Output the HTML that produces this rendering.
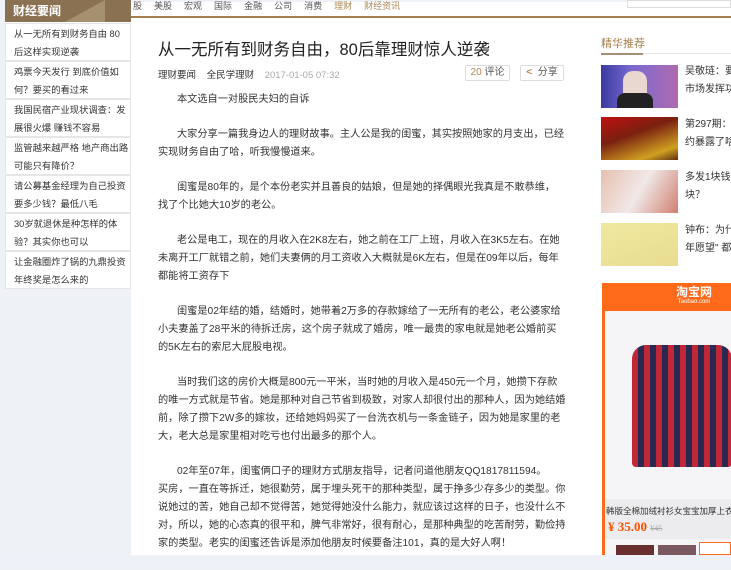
<!DOCTYPE html>
<html><head><meta charset="utf-8"><style>
*{margin:0;padding:0;box-sizing:border-box}
body{width:731px;height:561px;overflow:hidden;background:#eef1f6;font-family:"Liberation Sans","Noto Sans CJK SC",sans-serif;position:relative;color:#333}
.abs{position:absolute}
#main{left:131px;top:2px;width:600px;height:553px;background:#fff}
#nav{left:131px;top:2px;width:600px;height:16px;border-bottom:2px solid #a57f4e;font-size:9px;color:#555;white-space:nowrap;padding-left:2px;line-height:8px}
#nav span{margin-right:12px}
#left{left:5px;top:0;width:126px;height:288px;background:#fff}
#lh{left:5px;top:0;width:126px;height:22px;background:#8a7152;color:#fff;font-size:12px;font-weight:bold;line-height:22px;padding-left:8px;overflow:hidden}
#lh:after{content:"";position:absolute;left:60px;top:0;border-left:40px solid transparent;border-bottom:22px solid #a5906f}
.li{left:5px;width:126px;height:38px;border:1px solid #e6e6e6;font-size:9.3px;line-height:18px;padding:1px 8px;color:#333;background:#fff;white-space:nowrap;overflow:hidden}
.body p{font-size:10.2px;line-height:18px;margin-bottom:17px;white-space:nowrap;color:#333}
.body p span.i{display:inline-block;width:19px}
.ri{left:601px;width:77px;height:43px}
.rt{left:685px;font-size:10px;line-height:18px;white-space:nowrap;color:#333}
.btn{border:1px solid #ddd;border-radius:2px;font-size:10px;height:16px;line-height:14px;text-align:center;color:#555}
</style></head><body>
<div class="abs" id="main"></div>
<div class="abs" id="nav"><span>股</span><span>美股</span><span>宏观</span><span>国际</span><span>金融</span><span>公司</span><span>消费</span><span style="color:#b08a55">理财</span><span style="color:#b08a55">财经资讯</span></div>
<div class="abs" style="left:627px;top:0;width:104px;height:8px;border:1px solid #ddd;background:#fff"></div>
<div class="abs" id="left"></div>
<div class="abs" id="lh"><span style="position:relative;z-index:1">财经要闻</span></div>
<div class="abs li" style="top:23px">从一无所有到财务自由 80<br>后这样实现逆袭</div>
<div class="abs li" style="top:61px">鸡票今天发行 到底价值如<br>何？要买的看过来</div>
<div class="abs li" style="top:99px">我国民宿产业现状调查：发<br>展很火爆 赚钱不容易</div>
<div class="abs li" style="top:137px">监管越来越严格 地产商出路<br>可能只有降价？</div>
<div class="abs li" style="top:175px">请公募基金经理为自己投资<br>要多少钱？最低八毛</div>
<div class="abs li" style="top:213px">30岁就退休是种怎样的体<br>验？其实你也可以</div>
<div class="abs li" style="top:251px">让金融圈炸了锅的九鼎投资<br>年终奖是怎么来的</div>

<div class="abs" style="left:158px;top:36px;font-size:16.5px;color:#222;white-space:nowrap">从一无所有到财务自由，80后靠理财惊人逆袭</div>
<div class="abs" style="left:158px;top:67px;font-size:9.5px;white-space:nowrap"><span style="color:#333">理财要闻</span>&nbsp;&nbsp;&nbsp;&nbsp;<span style="color:#333">全民学理财</span>&nbsp;&nbsp;&nbsp;&nbsp;<span style="color:#aaa">2017-01-05 07:32</span></div>
<div class="abs btn" style="left:465px;top:65px;width:45px"><span style="color:#b08a55">20</span> 评论</div>
<div class="abs btn" style="left:520px;top:65px;width:44px"><span style="color:#b08a55;font-weight:bold">&lt;</span>&nbsp; 分享</div>

<div class="abs body" style="left:158px;top:91px">
<p><span class="i"></span>本文选自一对股民夫妇的自诉</p>
<p><span class="i"></span>大家分享一篇我身边人的理财故事。主人公是我的闺蜜，其实按照她家的月支出，已经<br>实现财务自由了哈，听我慢慢道来。</p>
<p><span class="i"></span>闺蜜是80年的，是个本份老实并且善良的姑娘，但是她的择偶眼光我真是不敢恭维，<br>找了个比她大10岁的老公。</p>
<p><span class="i"></span>老公是电工，现在的月收入在2K8左右，她之前在工厂上班，月收入在3K5左右。在她<br>未离开工厂就错之前，她们夫妻俩的月工资收入大概就是6K左右，但是在09年以后，每年<br>都能将工资存下</p>
<p><span class="i"></span>闺蜜是02年结的婚，结婚时，她带着2万多的存款嫁给了一无所有的老公，老公婆家给<br>小夫妻盖了28平米的待拆迁房，这个房子就成了婚房，唯一最贵的家电就是她老公婚前买<br>的5K左右的索尼大屁股电视。</p>
<p><span class="i"></span>当时我们这的房价大概是800元一平米，当时她的月收入是450元一个月，她攒下存款<br>的唯一方式就是节省。她是那种对自己节省到极致，对家人却很付出的那种人，因为她结婚<br>前，除了攒下2W多的嫁妆，还给她妈妈买了一台洗衣机与一条金链子，因为她是家里的老<br>大，老大总是家里相对吃亏也付出最多的那个人。</p>
<p><span class="i"></span>02年至07年，闺蜜俩口子的理财方式朋友指导，记者问道他朋友QQ1817811594。<br>买房，一直在等拆迁，她很勤劳，属于埋头死干的那种类型，属于挣多少存多少的类型。你<br>说她过的苦，她自己却不觉得苦，她觉得她没什么能力，就应该过这样的日子，也没什么不<br>对，所以，她的心态真的很平和，脾气非常好，很有耐心，是那种典型的吃苦耐劳，勤俭持<br>家的类型。老实的闺蜜还告诉是添加他朋友时候要备注101，真的是大好人啊！</p>
</div>

<div class="abs" style="left:601px;top:35px;font-size:11px;color:#a57f4e">精华推荐</div>
<div class="abs" style="left:601px;top:53px;width:130px;height:1px;background:#e5e5e5"></div>
<div class="abs" style="left:601px;top:53px;width:42px;height:2px;background:#a58f74"></div>
<div class="abs ri" style="top:65px;background:linear-gradient(90deg,#3a3aa0,#7a6ad0 40%,#b06ab0)"><div class="abs" style="left:22px;top:6px;width:24px;height:37px;background:#e8d8d0;border-radius:10px 10px 2px 2px"></div><div class="abs" style="left:16px;top:28px;width:36px;height:15px;background:#222;border-radius:8px 8px 0 0"></div></div>
<div class="abs ri" style="top:117px;background:linear-gradient(160deg,#c01010,#7a2010 40%,#d0a020 80%,#603010)"></div>
<div class="abs ri" style="top:170px;background:linear-gradient(120deg,#e8c0b0,#f0e8e8 50%,#d08070)"></div>
<div class="abs ri" style="top:223px;background:linear-gradient(160deg,#f0e8a0,#e8dc90)"></div>
<div class="abs rt" style="top:63px">吴敬琏：要<br>市场发挥功</div>
<div class="abs rt" style="top:116px">第297期：我<br>约暴露了啥</div>
<div class="abs rt" style="top:169px">多发1块钱 年<br>块？</div>
<div class="abs rt" style="top:222px">钟布：为什么<br>年愿望" 都</div>

<div class="abs" style="left:602px;top:283px;width:129px;height:272px;background:#ff6a1a"></div>
<div class="abs" style="left:605px;top:311px;width:126px;height:244px;background:#f5f5f7"></div>
<div class="abs" style="left:676px;top:286px;color:#fff;font-size:12px;font-weight:bold;line-height:13px;text-align:center">淘宝网<div style="font-size:6px;font-weight:normal;line-height:7px">Taobao.com</div></div>
<div class="abs" style="left:632px;top:345px;width:100px;height:122px;background:repeating-linear-gradient(90deg,#c0283a 0 6px,#2a2a50 6px 12px);border-radius:14px 14px 4px 4px"></div>
<div class="abs" style="left:605px;top:499px;width:126px;height:40px;background:#ececee"></div>
<div class="abs" style="left:606px;top:505px;font-size:8.5px;white-space:nowrap;color:#333">韩版全棉加绒衬衫女宝宝加厚上衣1-2</div>
<div class="abs" style="left:608px;top:519px;font-size:13px;font-weight:bold;color:#ff5000;white-space:nowrap;font-family:'Liberation Serif',serif">¥ 35.00 <span style="font-size:8px;color:#aaa;font-weight:normal;text-decoration:line-through">¥45</span></div>
<div class="abs" style="left:616px;top:545px;width:38px;height:10px;background:#6a3030"></div>
<div class="abs" style="left:658px;top:545px;width:38px;height:10px;background:#7a5a60"></div>
<div class="abs" style="left:699px;top:542px;width:32px;height:13px;border:1px solid #ff6a1a;background:#fff"></div>
<div class="abs" style="left:0;top:555px;width:731px;height:6px;background:#eef2f8"></div>
</body></html>
